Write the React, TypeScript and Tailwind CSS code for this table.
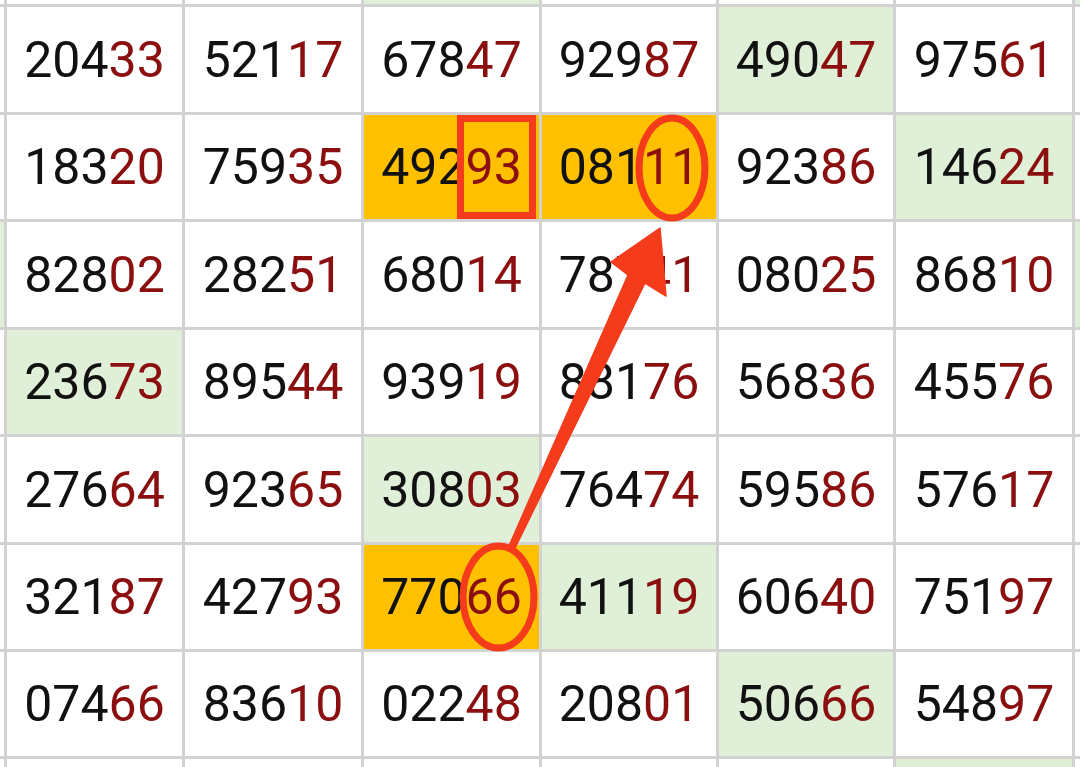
import React from "react";

type Fill = "w" | "g" | "o";

const ROWS: string[][] = [
  ["20433", "52117", "67847", "92987", "49047", "97561"],
  ["18320", "75935", "49293", "08111", "92386", "14624"],
  ["82802", "28251", "68014", "78741", "08025", "86810"],
  ["23673", "89544", "93919", "88176", "56836", "45576"],
  ["27664", "92365", "30803", "76474", "59586", "57617"],
  ["32187", "42793", "77066", "41119", "60640", "75197"],
  ["07466", "83610", "02248", "20801", "50666", "54897"],
];

// fills for the full 9 x 8 grid (partial edge rows / columns included)
const FILLS: Fill[][] = [
  ["w", "w", "w", "g", "w", "w", "w", "g"],
  ["w", "w", "w", "w", "w", "g", "w", "w"],
  ["w", "w", "w", "o", "o", "w", "g", "w"],
  ["g", "w", "w", "w", "w", "w", "w", "g"],
  ["w", "g", "w", "w", "w", "w", "w", "w"],
  ["w", "w", "w", "g", "w", "w", "w", "w"],
  ["w", "w", "w", "o", "g", "w", "w", "w"],
  ["w", "w", "w", "w", "w", "g", "w", "w"],
  ["w", "w", "w", "w", "w", "w", "g", "w"],
];

const fillClass: Record<Fill, string> = {
  w: "bg-white",
  g: "bg-[#dfefd8]",
  o: "bg-[#ffc000]",
};

function Cell({ value, fill }: { value?: string; fill: Fill }) {
  return (
    <div className={`flex items-center justify-center ${fillClass[fill]}`}>
      {value && (
        <span className="text-[50px] leading-none">
          <span className="text-[#111111]">{value.slice(0, 3)}</span>
          <span className="text-[#8b0f0f]">{value.slice(3)}</span>
        </span>
      )}
    </div>
  );
}

function Markup() {
  // red pen annotations drawn on top of the sheet
  const red = "#f43c1c";
  return (
    <svg
      className="pointer-events-none absolute left-0 top-0"
      width={1080}
      height={767}
      viewBox="0 0 1080 767"
    >
      <rect x={460.5} y={118.5} width={72} height={97} fill="none" stroke={red} strokeWidth={7} />
      <ellipse cx={672} cy={168} rx={33} ry={50} fill="none" stroke={red} strokeWidth={7} />
      <ellipse cx={498.5} cy={597} rx={35.5} ry={51} fill="none" stroke={red} strokeWidth={7} />
      <polygon
        points="509,546 628,275 611,262 660,228 666,296 645,283 515,548"
        fill={red}
        stroke={red}
        strokeWidth={1.5}
        strokeLinejoin="round"
      />
    </svg>
  );
}

export default function App() {
  return (
    <div className="relative h-[767px] w-[1080px] overflow-hidden bg-white font-['Roboto',_'Liberation_Sans',_sans-serif]">
      <div className="grid h-full w-full grid-cols-[4px_175px_176px_175px_174px_174px_176px_1fr] grid-rows-[4px_105px_104px_105px_104px_105px_104px_104px_8px] gap-[3px] bg-[#d2d2d2]">
        {FILLS.map((row, r) =>
          row.map((fill, c) => {
            const inner = r >= 1 && r <= 7 && c >= 1 && c <= 6;
            return (
              <Cell
                key={`${r}-${c}`}
                fill={fill}
                value={inner ? ROWS[r - 1][c - 1] : undefined}
              />
            );
          })
        )}
      </div>
      <Markup />
    </div>
  );
}
